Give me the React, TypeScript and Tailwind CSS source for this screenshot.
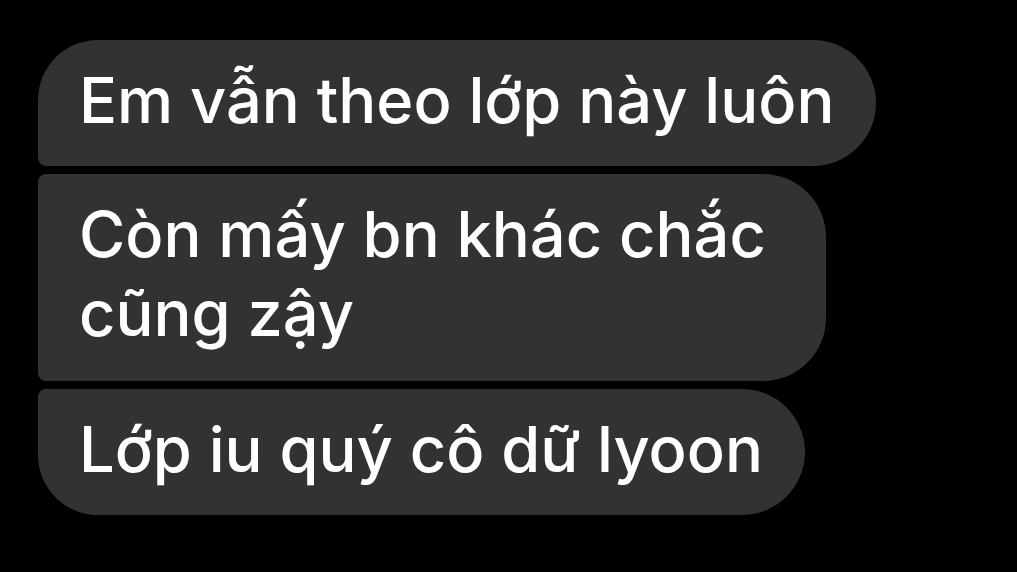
export default function App() {
  return (
    <div className="min-h-[572px] w-full bg-black pl-[38px] pt-[40px] font-['Inter','Noto_Sans',sans-serif]">
      <div className="flex flex-col items-start gap-2">
        <div className="w-fit rounded-tl-[60px] rounded-tr-[63px] rounded-br-[63px] rounded-bl-[8px] bg-[#323232] pl-[41px] pr-[42px] pt-[21px] pb-[26px] text-[63.2px] leading-[79px] font-medium text-white">
          Em vẫn theo lớp này luôn
        </div>
        <div className="w-[788px] rounded-tl-[8px] rounded-tr-[63px] rounded-br-[63px] rounded-bl-[8px] bg-[#323232] pl-[41px] pr-[42px] pt-[21px] pb-[28px] text-[63.2px] leading-[79px] font-medium text-white">
          Còn mấy bn khác chắc cũng zậy
        </div>
        <div className="w-fit rounded-tl-[8px] rounded-tr-[63px] rounded-br-[63px] rounded-bl-[60px] bg-[#323232] pl-[41px] pr-[42px] pt-[21px] pb-[26px] text-[63.2px] leading-[79px] font-medium text-white">
          Lớp iu quý cô dữ lyoon
        </div>
      </div>
    </div>
  )
}
